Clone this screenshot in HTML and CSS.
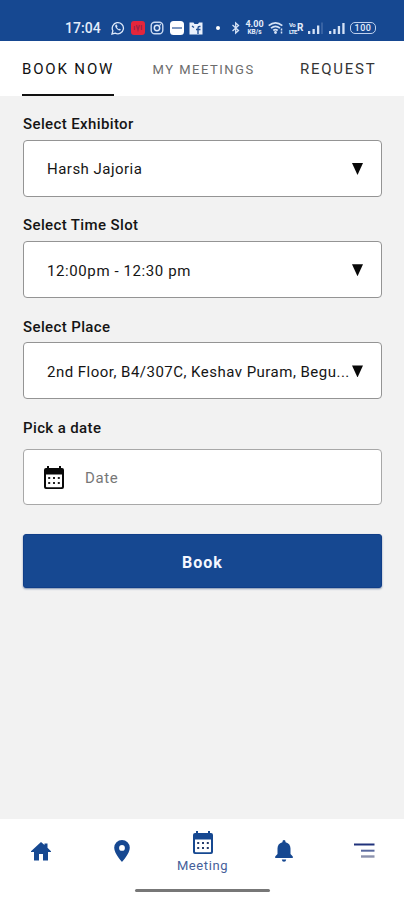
FILE: index.html
```html
<!DOCTYPE html>
<html lang="en">
<head>
<meta charset="utf-8">
<meta name="viewport" content="width=device-width, initial-scale=1">
<title>Book a meeting</title>
<link rel="stylesheet" href="styles.css">
</head>
<body>
<div class="screen">
  <header class="status">
    <span class="clock">17:04</span>
    <div class="status-apps">
      <svg width="14" height="14" viewBox="0 0 14 14"><path d="M1 13l.9-3.2A5.6 5.6 0 1 1 4.200 12.100z" fill="none" stroke="#dce8fa" stroke-width="1.300"/><path d="M4.700 3.800c-.9.7-.7 2 .7 3.700 1.500 1.700 3 2.500 4 1.700.6-.5.4-.9-.2-1.300-.8-.5-1 .4-1.400.3-.7-.2-1.700-1.300-1.800-1.900 0-.4.700-.5.400-1.300-.4-.9-.9-1.800-1.700-1.200z" fill="#dce8fa"/></svg>
      <svg width="14" height="14" viewBox="0 0 14 14"><rect width="14" height="14" rx="3" fill="#e3263c"/><path d="M3.500 5v4M5.500 4l1.500 5 1.500-5M10.500 4v5" fill="none" stroke="#9c2345" stroke-width="1.300"/></svg>
      <svg width="14" height="14" viewBox="0 0 14 14"><rect x="1.200" y="1.200" width="11.600" height="11.600" rx="3.500" fill="none" stroke="#c9d9f2" stroke-width="1.400"/><circle cx="7" cy="7" r="2.700" fill="none" stroke="#dce8fa" stroke-width="1.500"/><circle cx="10.300" cy="3.700" r=".8" fill="#dce8fa"/></svg>
      <svg width="14" height="14" viewBox="0 0 14 14"><rect width="14" height="14" rx="3.500" fill="#fff"/><path d="M2 7h10" stroke="#486ca7" stroke-width="1.400"/></svg>
      <svg width="14" height="14" viewBox="0 0 14 14"><path d="M.5 1.500h4l1 1.500H9l1-1.500h3.500v12H.5z" fill="#eaf1fc"/><path d="M11.500 5.500h-1Q9 5.500 9 7v6M7 8.500h4.500M3 5l2 1.500" fill="none" stroke="#235295" stroke-width="1.400"/></svg>
    </div>
    <i class="status-dot"></i>
    <div class="status-system">
      <svg width="10" height="14" viewBox="0 0 10 14"><path d="M1.500 4l6 5.500L4.700 12V2l2.800 2.500L1.500 10" fill="none" stroke="#d5e2f6" stroke-width="1.300"/></svg>
      <span class="rate"><b>4.00</b><b class="unit">KB/s</b></span>
      <svg class="wifi" width="16" height="14" viewBox="0 0 16 14"><g fill="none" stroke="#d5e2f6" stroke-width="1.700"><path d="M.7 4.700Q7.500-1 14.300 4.700M3 7.200Q7.500 3.400 12 7.200M5.300 9.500Q7.500 7.600 9.700 9.500"/></g><circle cx="7.500" cy="11.500" r="1.400" fill="#d5e2f6"/><path d="M13.500 7.500v2M13.500 10.500v2" stroke="#d5e2f6" stroke-width="1.500"/></svg>
      <span class="volte"><span class="volte-stack"><b>Vo</b><b>LTE</b></span><strong>R</strong></span>
      <svg class="signal-one" width="15" height="14" viewBox="0 0 15 14"><g fill="#d5e2f6"><path d="M0 10h2.300v3H0zM4.500 8h2.300v5H4.500zM9 4.500h2.300V13H9z"/><path d="M13.500 1.500h1V13h-1z" opacity=".35"/></g></svg>
      <svg class="signal-two" width="16" height="14" viewBox="0 0 16 14"><path d="M0 10h2.300v3H0zM4.300 8h2.300v5H4.300zM8.800 5h2.300v8H8.800zM13.300 2h2.300v11h-2.300z" fill="#d5e2f6"/></svg>
      <span class="battery">100</span>
    </div>
  </header>

  <nav class="tabs">
    <a class="tab tab-active">BOOK NOW</a>
    <a class="tab tab-muted">MY MEETINGS</a>
    <a class="tab">REQUEST</a>
  </nav>

  <main class="form">
    <label class="label">Select Exhibitor</label>
    <div class="field"><span class="value">Harsh Jajoria</span><i class="caret"></i></div>
    <label class="label">Select Time Slot</label>
    <div class="field"><span class="value slot">12:00pm - 12:30 pm</span><i class="caret"></i></div>
    <label class="label">Select Place</label>
    <div class="field"><span class="value">2nd Floor, B4/307C, Keshav Puram, Begu...</span><i class="caret"></i></div>
    <label class="label">Pick a date</label>
    <div class="field field-date">
      <svg width="20" height="23" viewBox="0 0 20 23"><path d="M3 0h2v2h10V0h2v2h1q2 0 2 2v17q0 2-2 2H2q-2 0-2-2V4q0-2 2-2h1z" fill="#090909"/><path d="M2 8.500h16v12q0 .7-.7.700H2.700q-.7 0-.7-.7z" fill="#fff"/><path d="M4.200 11h2v2h-2zM9 11h2v2H9zM13.800 11h2v2h-2zM4.200 16h2v2h-2zM9 16h2v2H9zM13.800 16h2v2h-2z" fill="#222"/></svg>
      <span class="placeholder">Date</span>
    </div>
    <button class="book">Book</button>
  </main>

  <footer class="bottom">
    <nav class="bottom-nav">
      <a class="nav-item"><svg width="20" height="19" viewBox="0 0 20 19"><path d="M10 0l3.500 3.100V1.500h3v4.300L20 9.300V10h-3v8.500h-5V12H8v6.500H3V10H0v-.7z" fill="#164891"/></svg></a>
      <a class="nav-item"><svg width="16" height="22" viewBox="0 0 16 22"><path d="M8 0a7.800 7.800 0 0 0-7.800 7.800C.2 13.500 8 22 8 22s7.800-8.500 7.800-14.200A7.800 7.800 0 0 0 8 0zm0 5a2.900 2.900 0 1 1 0 5.800A2.900 2.900 0 0 1 8 5z" fill="#164891" fill-rule="evenodd"/></svg></a>
      <a class="nav-item nav-meeting"><svg width="20" height="23" viewBox="0 0 20 23"><path d="M3 0h2v2h10V0h2v2h1q2 0 2 2v17q0 2-2 2H2q-2 0-2-2V4q0-2 2-2h1z" fill="#164891"/><path d="M2 8.500h16v12q0 .7-.7.700H2.700q-.7 0-.7-.7z" fill="#fff"/><path d="M4.200 11h2v2h-2zM9 11h2v2H9zM13.800 11h2v2h-2zM4.200 16h2v2h-2zM9 16h2v2H9zM13.800 16h2v2h-2z" fill="#263e6e"/></svg><span>Meeting</span></a>
      <a class="nav-item"><svg width="18" height="22" viewBox="0 0 18 22"><path d="M9 0q1.600 0 1.600 2.200C14 3 15.500 5.500 15.500 8.500V14l2.300 2.500V18H.2v-1.500L2.500 14V8.500c0-3 1.500-5.500 4.900-6.300Q7.400 0 9 0zM6.800 19.500h4.400Q11 21.700 9 21.700t-2.200-2.200z" fill="#164891"/></svg></a>
      <a class="nav-item"><svg width="21" height="16" viewBox="0 0 21 16"><path d="M0 1.500h20.500" stroke="#20327b" stroke-width="2"/><path d="M7 7.700h13.500" stroke="#59699f" stroke-width="2"/><path d="M7 13.500h13.500" stroke="#8b91ad" stroke-width="2.400"/></svg></a>
    </nav>
    <div class="home-bar"></div>
  </footer>
</div>
</body>
</html>
```
FILE: styles.css
```css
* { box-sizing: border-box; }
body { margin: 0; font-family: Roboto, "Liberation Sans", sans-serif; color: #151515; }
.screen { width: 404px; height: 900px; display: flex; flex-direction: column; background: #f2f2f2; }
svg { display: block; flex: none; }

.status { height: 41px; padding: 14px 0 0 65px; display: flex; align-items: flex-start; background: #164891; color: #e4edfb; flex: none; }
.clock { width: 46px; height: 28px; line-height: 28px; font-size: 14px; font-weight: 500; letter-spacing: .05px; }
.status-apps, .status-system { height: 28px; display: flex; align-items: center; margin-top: -.5px; }
.status-apps { gap: 5.5px; }
.status-dot { width: 4px; height: 4px; border-radius: 50%; background: #fff; margin: 12px 0 0 13px; }
.status-system { margin-left: 11px; }
.rate { width: 19px; margin-left: 4px; display: flex; flex-direction: column; align-items: center; font-size: 9px; line-height: 8px; }
.rate .unit { font-size: 6.5px; line-height: 8px; }
.wifi { margin-left: 4px; }
.volte { display: flex; align-items: center; width: 15px; margin-left: 5px; font-size: 6px; }
.volte-stack { display: flex; flex-direction: column; width: 8px; line-height: 7px; letter-spacing: -.6px; }
.volte strong { font-size: 10px; line-height: 14px; }
.signal-one { margin-left: 4px; }
.signal-two { margin-left: 6px; }
.battery { width: 26px; height: 12px; margin-left: 5px; border: 1px solid #bed0ed; border-radius: 5px; font-size: 9px; font-weight: 500; line-height: 10px; text-align: center; letter-spacing: .5px; }

.tabs { height: 55px; flex: none; display: grid; grid-template-columns: 92px 104px 80px; column-gap: 38.5px; padding-left: 22px; background: #fff; }
.tab { height: 55px; line-height: 57px; font-size: 15px; letter-spacing: 1.75px; color: #353535; white-space: nowrap; }
.tab:last-child { margin-left: 5px; }
.tab-active { color: #111; letter-spacing: 1.85px; border-bottom: 2px solid #111; }
.tab-muted { font-size: 13px; letter-spacing: 1.5px; color: #6c6c6c; }

.form { flex: 1; padding: 18px 22px 0 23px; display: flex; flex-direction: column; }
.label { height: 20px; margin-bottom: 5.9px; line-height: 21px; font-size: 15px; font-weight: 500; letter-spacing: .38px; flex: none; }
.field { height: 57px; margin-bottom: 18.4px; padding: 0 18px 0 23px; border: 1px solid #949494; border-radius: 4px; background: #fff; display: flex; align-items: center; justify-content: space-between; flex: none; }
.value { padding-top: 2px; font-size: 15px; letter-spacing: .48px; white-space: nowrap; }
.slot { letter-spacing: .6px; }
.caret { width: 11px; height: 12px; margin-top: 1px; background: #080808; clip-path: polygon(0 0, 100% 0, 50% 100%); flex: none; }
.field-date { height: 56px; margin: 5.4px 0 29.3px; padding-left: 20px; justify-content: flex-start; gap: 21px; border-color: #a8a8a8; }
.placeholder { padding-top: 1px; font-size: 15px; letter-spacing: .6px; color: #777; }
.book { height: 53.5px; padding-top: 3px; border: 1px solid #103e88; border-radius: 3px; background: #164891; color: #f5f8ff; font: 700 16px Roboto, sans-serif; letter-spacing: 1px; box-shadow: 0 1px 2px #7f91af; flex: none; }

.bottom { height: 81px; flex: none; display: flex; flex-direction: column; align-items: center; background: #fff; }
.bottom-nav { width: 404px; height: 70px; display: grid; grid-template-columns: repeat(5, 81px); flex: none; }
.nav-item { height: 64px; display: flex; flex-direction: column; align-items: center; justify-content: center; }
.nav-meeting { padding-top: 4px; font-size: 13px; line-height: 18px; letter-spacing: .6px; color: #46609a; gap: 3px; }
.home-bar { width: 135px; height: 3px; border-radius: 2px; background: #777; }
```
